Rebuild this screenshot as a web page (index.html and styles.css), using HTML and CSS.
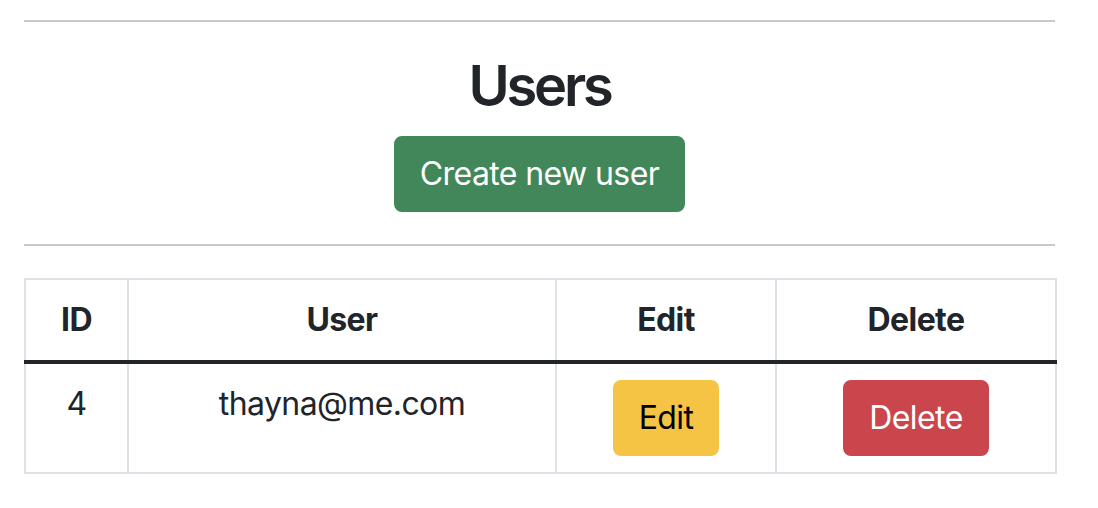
FILE: index.html
```html
<!DOCTYPE html>
<html lang="en">
<head>
<meta charset="utf-8">
<title>Users</title>
<link rel="stylesheet" href="styles.css">
</head>
<body>
<div class="container">
  <hr class="rule">
  <div class="header">
    <h3 class="title">Users</h3>
    <button class="btn btn-success">Create new user</button>
  </div>
  <hr class="rule">
  <table class="users">
    <colgroup>
      <col class="c-id">
      <col class="c-user">
      <col class="c-edit">
      <col class="c-delete">
    </colgroup>
    <thead>
      <tr>
        <th>ID</th>
        <th>User</th>
        <th>Edit</th>
        <th>Delete</th>
      </tr>
    </thead>
    <tbody>
      <tr>
        <td>4</td>
        <td>thayna@me.com</td>
        <td><button class="btn btn-warning">Edit</button></td>
        <td><button class="btn btn-danger">Delete</button></td>
      </tr>
    </tbody>
  </table>
</div>
</body>
</html>
```

FILE: styles.css
```css
html, body {
  margin: 0;
  padding: 0;
  background: #ffffff;
}

body {
  font-family: Inter, "Liberation Sans", Arial, sans-serif;
  color: #212529;
  font-size: 32px;
  line-height: 1.5;
  letter-spacing: -0.6px;
}

.container {
  width: 1031px;
  margin-left: 24px;
  padding-top: 20px;
}

.rule {
  margin: 0;
  border: 0;
  border-top: 2px solid #c8c9ca;
  height: 0;
}

.header {
  display: flex;
  flex-direction: column;
  align-items: center;
  padding: 31px 0 32px;
}

.title {
  margin: 0 0 16px;
  font-size: 56px;
  font-weight: 600;
  line-height: 1.2;
  letter-spacing: -3.2px;
  color: #212529;
}

.btn {
  font-family: inherit;
  font-size: 32px;
  line-height: 48px;
  letter-spacing: -0.6px;
  padding: 12px 24px;
  border: 2px solid transparent;
  border-radius: 8px;
  cursor: pointer;
}

.btn-success {
  background: #42875a;
  border-color: #42875a;
  color: #ffffff;
}

.btn-warning {
  background: #f6c444;
  border-color: #f6c444;
  color: #000000;
}

.btn-danger {
  background: #cb454d;
  border-color: #cb454d;
  color: #ffffff;
}

.users {
  margin-top: 32px;
  width: 1031px;
  border-collapse: collapse;
  table-layout: fixed;
}

.c-id { width: 103px; }
.c-user { width: 428px; }
.c-edit { width: 220px; }
.c-delete { width: 280px; }

.users th,
.users td {
  border: 2px solid #dee2e6;
  padding: 16px;
  text-align: center;
  vertical-align: top;
}

.users th {
  font-weight: 700;
  vertical-align: bottom;
}

.users thead th {
  border-bottom: 4px solid #212529;
}
```
